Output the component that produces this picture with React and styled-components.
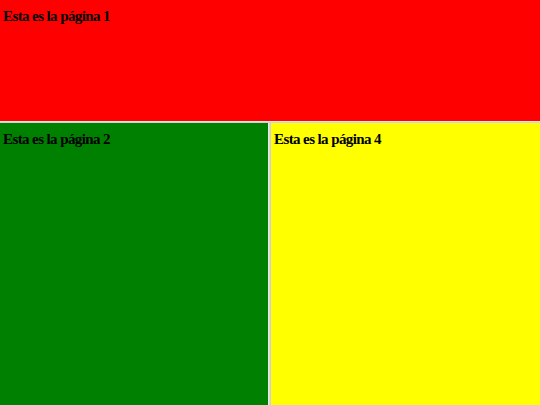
import React from 'react'
import styled, { createGlobalStyle } from 'styled-components'

const GlobalStyle = createGlobalStyle`
  html, body { margin: 0; padding: 0; height: 100%; }
  #root { height: 100%; }
`

const Frameset = styled.div`
  display: grid;
  grid-template-rows: 121px 2px 1fr;
  height: 405px;
  width: 540px;
  background: #d8d8d8;
`

const Row = styled.div`
  display: grid;
  grid-template-columns: 268px 3px 1fr;
  min-height: 0;
`

const Divider = styled.div`
  background: linear-gradient(${p => p.$vertical ? 'to right' : 'to bottom'}, #f0f0f0, #c8c8c8);
`

const Frame = styled.div`
  background: ${p => p.$color};
  padding: 8px 3px;
  font-family: "Liberation Serif", "Times New Roman", serif;
  font-weight: bold;
  font-size: 15px;
  letter-spacing: -0.6px;
  line-height: 17px;
  color: #000;
  overflow: hidden;
`

const App = () => {
  return (
    <>
      <GlobalStyle />
      <Frameset>
        <Frame $color="#ff0000">Esta es la página 1</Frame>
        <Divider />
        <Row>
          <Frame $color="#008000">Esta es la página 2</Frame>
          <Divider $vertical />
          <Frame $color="#ffff00">Esta es la página 4</Frame>
        </Row>
      </Frameset>
    </>
  )
}

export default App
